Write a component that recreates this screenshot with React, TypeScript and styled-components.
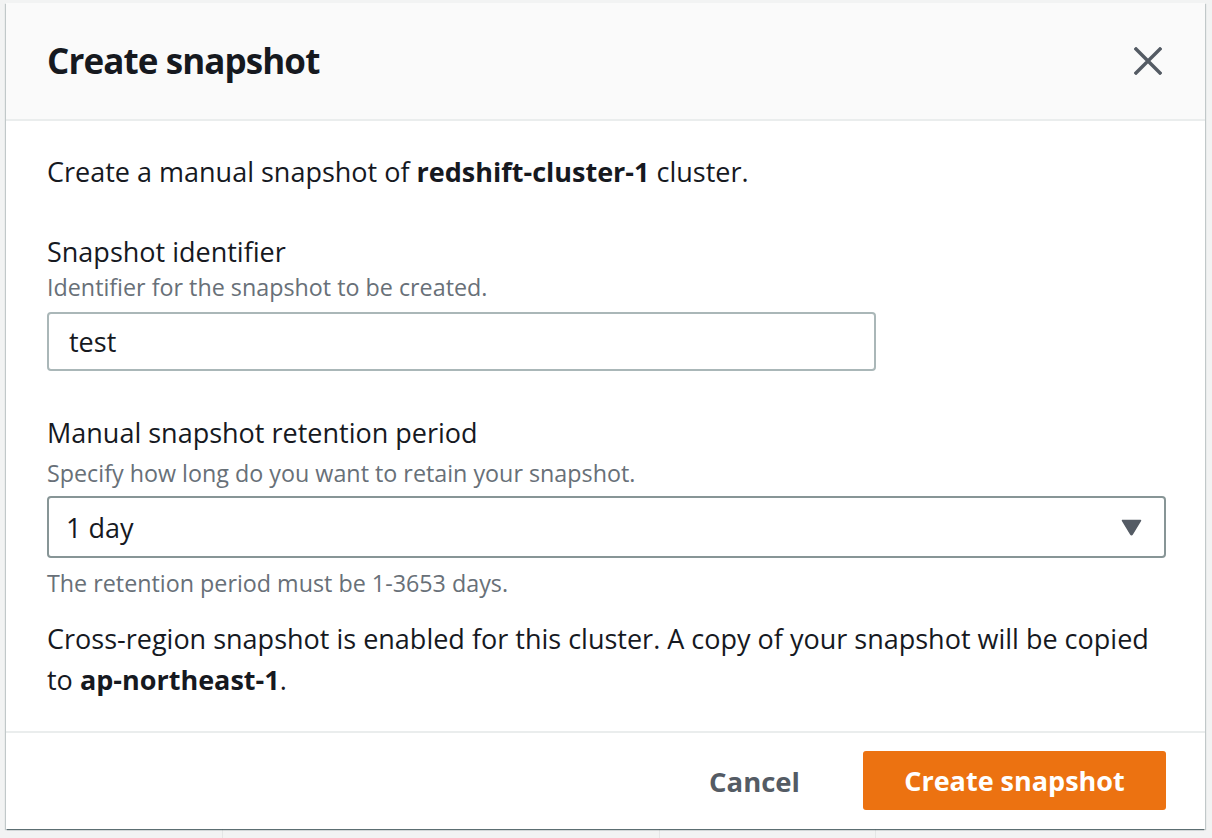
import React from "react";
import styled, { createGlobalStyle } from "styled-components";

const Global = createGlobalStyle`
  html, body { margin: 0; padding: 0; }
  body {
    background: #f2f3f3;
    font-family: "Open Sans", "Noto Sans", Arial, sans-serif;
    color: #16191f;
    width: 1212px;
    height: 838px;
    overflow: hidden;
  }
`;

const Page = styled.div`
  position: relative;
  width: 1212px;
  height: 838px;
  padding: 3px 0 0 6px;
  box-sizing: border-box;
`;

const Backdrop = styled.div`
  position: absolute;
  left: 0;
  right: 0;
  bottom: 0;
  height: 12px;
  display: grid;
  grid-template-columns: 222px 437px 216px 1fr;
`;

const BackCell = styled.div`
  border-left: 1px solid #e4e6e6;
  &:first-child { border-left: none; }
`;

const Modal = styled.div`
  position: relative;
  width: 1199px;
  height: 826px;
  background: #fff;
  display: flex;
  flex-direction: column;
  box-shadow: 0 2px 1px -1px rgba(0, 28, 36, 0.4), 1px 1px 1px 0 rgba(0, 28, 36, 0.2),
    -1px 1px 1px 0 rgba(0, 28, 36, 0.2);
`;

const Header = styled.div`
  height: 116px;
  background: #fafafa;
  border-bottom: 2px solid #eaeded;
  display: flex;
  align-items: center;
  justify-content: space-between;
  padding: 0 41px;
  flex-shrink: 0;
`;

const Title = styled.h2`
  margin: 0;
  font-size: 35px;
  font-weight: 700;
  color: #16191f;
  letter-spacing: -0.9px;
  padding-bottom: 2px;
`;

const CloseButton = styled.button`
  border: none;
  background: none;
  padding: 0;
  margin-right: -1px;
  width: 34px;
  height: 34px;
  display: flex;
  align-items: center;
  justify-content: center;
  cursor: pointer;
`;

const Body = styled.div`
  padding: 35px 41px 0 41px;
  flex: 1;
  display: flex;
  flex-direction: column;
`;

const Text = styled.p`
  margin: 0;
  font-size: 27px;
  line-height: 32px;
  color: #16191f;
`;

const Para = styled(Text)`
  line-height: 41px;
  margin-top: 18px;
`;

const Field = styled.div<{ $top: number }>`
  display: flex;
  flex-direction: column;
  margin-top: ${(p) => p.$top}px;
`;

const Label = styled.div`
  font-size: 27px;
  line-height: 34px;
  color: #16191f;
`;

const Desc = styled.div<{ $gap?: number }>`
  font-size: 23.3px;
  line-height: 34px;
  color: #687078;
  margin-top: ${(p) => p.$gap ?? 1}px;
`;

const Input = styled.div`
  margin-top: 8px;
  width: 829px;
  height: 59px;
  box-sizing: border-box;
  border: 2px solid #aab7b8;
  border-radius: 4px;
  display: flex;
  align-items: center;
  padding-left: 20px;
  font-size: 27px;
  color: #16191f;
`;

const Select = styled.div`
  margin-top: 6px;
  width: 1119px;
  height: 62px;
  box-sizing: border-box;
  border: 2px solid #879596;
  border-radius: 4px;
  display: flex;
  align-items: center;
  justify-content: space-between;
  padding: 0 22px 0 17px;
  font-size: 27px;
  color: #16191f;
`;

const Footer = styled.div`
  height: 96px;
  border-top: 2px solid #eaeded;
  display: flex;
  align-items: center;
  justify-content: flex-end;
  padding: 0 39px 0 41px;
  flex-shrink: 0;
`;

const LinkButton = styled.button`
  border: none;
  background: none;
  font-family: inherit;
  font-size: 27.5px;
  font-weight: 700;
  color: #545b64;
  padding: 0 32px;
  height: 59px;
  margin-right: 31px;
  cursor: pointer;
`;

const PrimaryButton = styled.button`
  border: none;
  background: #ec7211;
  color: #fff;
  font-family: inherit;
  font-size: 27px;
  font-weight: 700;
  height: 59px;
  width: 303px;
  border-radius: 3px;
  cursor: pointer;
  margin-bottom: 2px;
`;

export default function App() {
  return (
    <>
      <Global />
      <Page>
        <Backdrop>
          <BackCell />
          <BackCell />
          <BackCell />
          <BackCell />
        </Backdrop>
        <Modal>
          <Header>
            <Title>Create snapshot</Title>
            <CloseButton aria-label="Close">
              <svg width="28" height="28" viewBox="0 0 28 28">
                <path d="M2 2 L26 26 M26 2 L2 26" stroke="#545b64" strokeWidth="3.4" strokeLinecap="square" />
              </svg>
            </CloseButton>
          </Header>
          <Body>
            <Text>
              Create a manual snapshot of <b>redshift-cluster-1</b> cluster.
            </Text>
            <Field $top={47}>
              <Label>Snapshot identifier</Label>
              <Desc>Identifier for the snapshot to be created.</Desc>
              <Input>test</Input>
            </Field>
            <Field $top={45}>
              <Label>Manual snapshot retention period</Label>
              <Desc $gap={6}>Specify how long do you want to retain your snapshot.</Desc>
              <Select>
                <span>1 day</span>
                <svg width="21" height="17" viewBox="0 0 21 17">
                  <path d="M1.5 1.5 H19.5 L11.3 15.2 Q10.5 16.4 9.7 15.2 Z" fill="#545b64" stroke="#545b64" strokeWidth="1.5" strokeLinejoin="round" />
                </svg>
              </Select>
              <Desc $gap={8}>The retention period must be 1-3653 days.</Desc>
            </Field>
            <Para>
              Cross-region snapshot is enabled for this cluster. A copy of your snapshot will be copied
              to <b>ap-northeast-1</b>.
            </Para>
          </Body>
          <Footer>
            <LinkButton>Cancel</LinkButton>
            <PrimaryButton>Create snapshot</PrimaryButton>
          </Footer>
        </Modal>
      </Page>
    </>
  );
}
